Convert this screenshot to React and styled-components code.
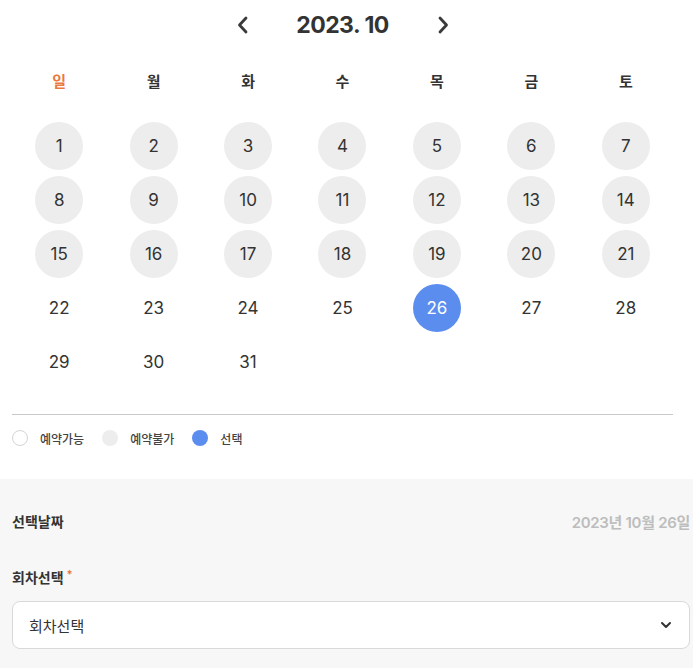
import React from "react";
import styled, { createGlobalStyle } from "styled-components";

const GlobalStyle = createGlobalStyle`
  body {
    margin: 0;
    font-family: "Inter", "Noto Sans CJK KR", sans-serif;
    color: #333;
    background: #fff;
  }
`;

const CalendarWrap = styled.div`
  padding: 0 20px 0 12px;
`;

const Header = styled.div`
  height: 50px;
  display: flex;
  align-items: center;
  justify-content: center;
  gap: 34px;
`;

const NavButton = styled.button`
  border: 0;
  background: none;
  padding: 0;
  width: 32px;
  height: 32px;
  display: flex;
  align-items: center;
  justify-content: center;
  color: #3a3a3a;
  cursor: pointer;
`;

const Title = styled.h2`
  margin: 0;
  font-size: 23px;
  font-weight: 700;
  letter-spacing: -0.5px;
  color: #333;
  width: 100px;
  text-align: center;
`;

const Grid = styled.div`
  display: grid;
  grid-template-columns: repeat(7, 1fr);
  row-gap: 6px;
`;

const WeekDay = styled.div`
  height: 30px;
  display: flex;
  align-items: center;
  justify-content: center;
  font-size: 15px;
  font-weight: 700;
  color: ${(p) => (p.$sunday ? "#e8793f" : "#333")};
  margin-top: 15px;
  margin-bottom: 21px;
`;

const DayCell = styled.div`
  display: flex;
  justify-content: center;
`;

const Day = styled.div`
  width: 48px;
  height: 48px;
  border-radius: 50%;
  display: flex;
  align-items: center;
  justify-content: center;
  font-size: 17px;
  color: ${(p) => (p.$state === "selected" ? "#fff" : "#333")};
  background: ${(p) =>
    p.$state === "selected" ? "#5b8def" : p.$state === "off" ? "#ededed" : "transparent"};
`;

const Divider = styled.hr`
  margin: 28px 0 0;
  border: 0;
  border-top: 1px solid #c9c9c9;
`;

const Legend = styled.div`
  height: 46px;
  display: flex;
  align-items: center;
  gap: 18px;
  padding-bottom: 18px;
`;

const LegendItem = styled.div`
  display: flex;
  align-items: center;
  gap: 12px;
  font-size: 12px;
  font-weight: 500;
  color: #444;
`;

const Dot = styled.span`
  width: 16px;
  height: 16px;
  border-radius: 50%;
  box-sizing: border-box;
  border: ${(p) => (p.$kind === "open" ? "1px solid #d4d4d4" : "0")};
  background: ${(p) =>
    p.$kind === "selected" ? "#5b8def" : p.$kind === "off" ? "#ededed" : "#fff"};
`;

const Panel = styled.div`
  background: #f7f7f7;
  padding: 32px 3px 24px 12px;
`;

const InfoRow = styled.div`
  display: flex;
  justify-content: space-between;
  align-items: center;
  height: 20px;
`;

const Label = styled.div`
  font-size: 14px;
  font-weight: 700;
  color: #333;
`;

const Required = styled.span`
  color: #e8793f;
  margin-left: 3px;
  font-size: 11px;
  vertical-align: top;
`;

const DateValue = styled.div`
  font-size: 15px;
  font-weight: 600;
  letter-spacing: -0.3px;
  color: #bdbdbd;
`;

const Field = styled.div`
  margin-top: 36px;
  display: flex;
  flex-direction: column;
  gap: 14px;
`;

const Select = styled.div`
  height: 46px;
  background: #fff;
  border: 1px solid #d9d9d9;
  border-radius: 8px;
  display: flex;
  align-items: center;
  justify-content: space-between;
  padding: 0 16px 0 16px;
  font-size: 15px;
  color: #333;
`;

const weekDays = ["일", "월", "화", "수", "목", "금", "토"];

const Chevron = ({ dir }) => (
  <svg width="16" height="20" viewBox="0 0 16 20" fill="none">
    <path
      d={dir === "left" ? "M11 3 L4.5 10 L11 17" : "M5 3 L11.5 10 L5 17"}
      stroke="currentColor"
      strokeWidth="2.8"
      strokeLinecap="round"
      strokeLinejoin="round"
    />
  </svg>
);

const App = () => {
  const days = Array.from({ length: 31 }, (_, i) => i + 1);
  return (
    <>
      <GlobalStyle />
      <CalendarWrap>
        <Header>
          <NavButton aria-label="prev">
            <Chevron dir="left" />
          </NavButton>
          <Title>2023. 10</Title>
          <NavButton aria-label="next">
            <Chevron dir="right" />
          </NavButton>
        </Header>
        <Grid>
          {weekDays.map((d, i) => (
            <WeekDay key={d} $sunday={i === 0}>
              {d}
            </WeekDay>
          ))}
          {days.map((d) => (
            <DayCell key={d}>
              <Day $state={d === 26 ? "selected" : d <= 21 ? "off" : "open"}>{d}</Day>
            </DayCell>
          ))}
        </Grid>
        <Divider />
        <Legend>
          <LegendItem>
            <Dot $kind="open" />
            예약가능
          </LegendItem>
          <LegendItem>
            <Dot $kind="off" />
            예약불가
          </LegendItem>
          <LegendItem>
            <Dot $kind="selected" />
            선택
          </LegendItem>
        </Legend>
      </CalendarWrap>
      <Panel>
        <InfoRow>
          <Label>선택날짜</Label>
          <DateValue>2023년 10월 26일</DateValue>
        </InfoRow>
        <Field>
          <Label>
            회차선택<Required>*</Required>
          </Label>
          <Select>
            회차선택
            <svg width="14" height="14" viewBox="0 0 14 14" fill="none">
              <path d="M3 5 L7 9 L11 5" stroke="#333" strokeWidth="2" strokeLinecap="round" strokeLinejoin="round" />
            </svg>
          </Select>
        </Field>
      </Panel>
    </>
  );
};

export default App;
